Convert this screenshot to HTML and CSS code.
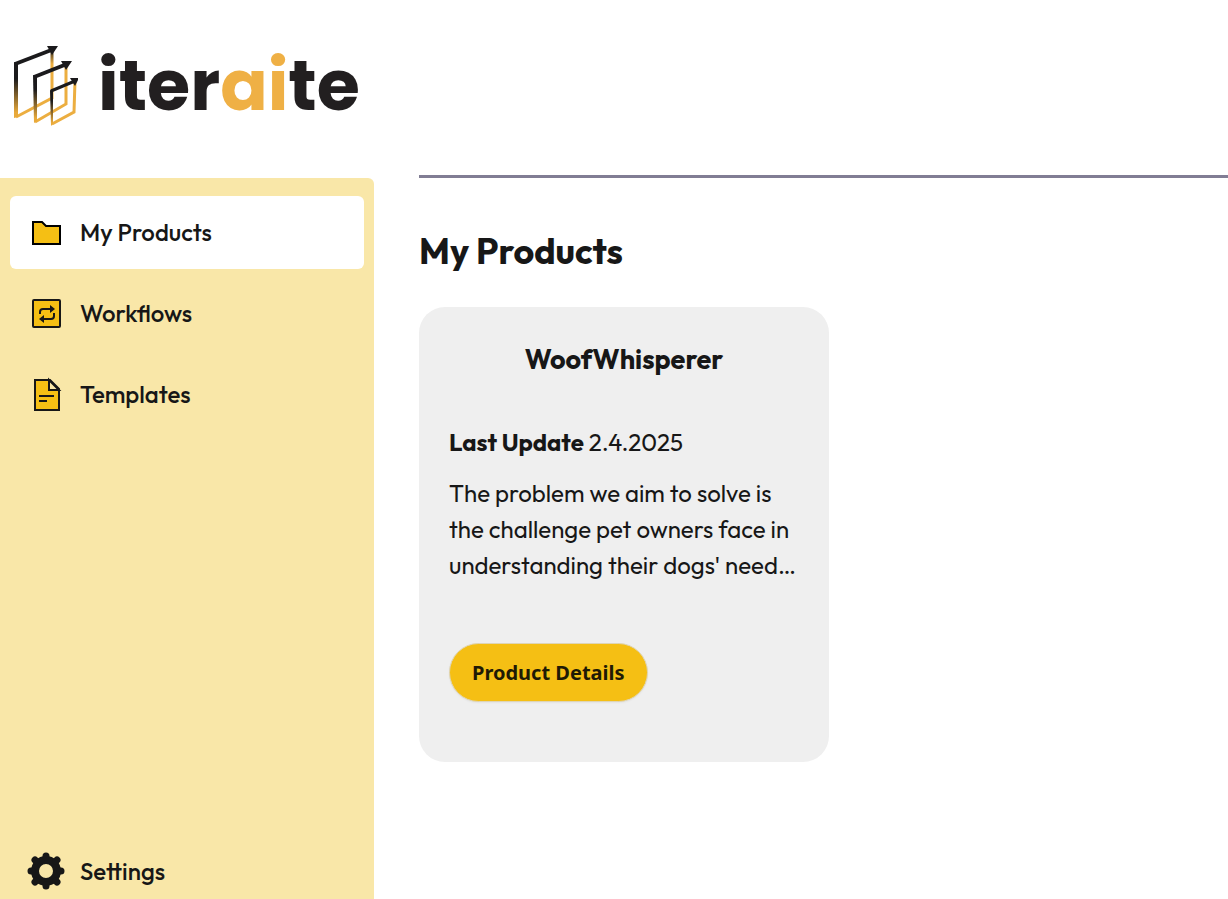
FILE: index.html
```html
<!DOCTYPE html>
<html lang="en">
<head>
    <meta charset="UTF-8">
    <meta name="viewport" content="width=device-width, initial-scale=1.0">
    <title>iteraite - My Products</title>
    <link rel="stylesheet" href="styles.css">
</head>
<body>
    <header class="header">
        <a class="logo" href="#">
            <svg class="logo-mark" width="66" height="84" viewBox="0 0 66 84" fill="none" aria-hidden="true">
                <defs>
                    <linearGradient id="side" x1="0" y1="0" x2="0" y2="1">
                        <stop offset="0.3" stop-color="#1b1a1c"/>
                        <stop offset="0.9" stop-color="#e8a93a"/>
                    </linearGradient>
                    <linearGradient id="edge" gradientUnits="userSpaceOnUse" x1="0" y1="4" x2="0" y2="20">
                        <stop offset="0" stop-color="#1b1a1c"/>
                        <stop offset="1" stop-color="#ecae40"/>
                    </linearGradient>
                </defs>
                <path d="M40 6V54L4 73" stroke="url(#edge)" stroke-width="3"/>
                <path d="M2 18L6 19L6 73L2 74Z" fill="url(#side)"/>
                <path d="M3 20L42 5" stroke="#1b1a1c" stroke-width="4"/>
                <path d="M35 2L46 2L40 11Z" fill="#1b1a1c"/>
                <path d="M54 20V60L23 78" stroke="#ecae40" stroke-width="3"/>
                <path d="M21 31L25 32L25 77L22 79Z" fill="url(#side)"/>
                <path d="M22 33L55 20" stroke="#1b1a1c" stroke-width="4"/>
                <path d="M49 17L60 17L54 26Z" fill="#1b1a1c"/>
                <path d="M63 37L62 68L40 80" stroke="#ecae40" stroke-width="3"/>
                <path d="M38 46L41 47L41 80L39 82Z" fill="url(#side)"/>
                <path d="M39 47L63 37" stroke="#1b1a1c" stroke-width="3"/>
                <path d="M58 34L67 34L63 42Z" fill="#1b1a1c"/>
            </svg>
            <span class="logo-text">iter<span>ai</span>te</span>
        </a>
    </header>
    <div class="container">
        <nav class="sidebar">
            <a class="nav-item active" href="#">
                <svg width="38" height="38" viewBox="0 0 38 38" fill="#f5bf14" stroke="#000" stroke-width="2" aria-hidden="true">
                    <path d="M6 9H15L19 13H33V31H6Z"/>
                </svg>
                My Products
            </a>
            <a class="nav-item" href="#">
                <svg width="38" height="38" viewBox="0 0 38 38" fill="none" stroke="#171717" stroke-width="2" aria-hidden="true">
                    <rect x="6" y="6" width="27" height="27" rx="1" fill="#f5bf14"/>
                    <path d="M13 20V18Q13 15 16 15H24M27 19V22Q27 25 24 25H15"/>
                    <path d="M23 11L28 15L23 19ZM17 21L12 25L17 29Z" fill="#171717" stroke="none"/>
                </svg>
                Workflows
            </a>
            <a class="nav-item" href="#">
                <svg width="38" height="38" viewBox="0 0 38 38" fill="none" stroke="#171717" stroke-width="2" aria-hidden="true">
                    <path d="M8 5H23L32 14V35H8Z" fill="#f5bf14"/>
                    <path d="M22 5V15H32Z" fill="#f9e7a8"/>
                    <path d="M12 21H27M12 26H20"/>
                </svg>
                Templates
            </a>
            <a class="nav-item settings" href="#">
                <svg width="38" height="38" viewBox="0 0 38 38" aria-hidden="true">
                    <g fill="none" stroke="#171717" transform="translate(19 19)">
                        <circle r="11" stroke-width="8"/>
                        <path d="M0 -15V-14M0 15V14M-15 0H-14M15 0H14M-11 -11L-10 -10M11 11L10 10M11 -11L10 -10M-11 11L-10 10" stroke-width="7" stroke-linecap="round"/>
                    </g>
                </svg>
                Settings
            </a>
        </nav>
        <main class="content">
            <h1>My Products</h1>
            <section class="products">
                <article class="card">
                    <h2>WoofWhisperer</h2>
                    <p class="update"><strong>Last Update</strong> 2.4.2025</p>
                    <p class="description">The problem we aim to solve is<br>the challenge pet owners face in<br>understanding their dogs' need…</p>
                    <button type="button">Product Details</button>
                </article>
            </section>
        </main>
    </div>
</body>
</html>
```
FILE: styles.css
```css
* {
    box-sizing: border-box;
}
body {
    margin: 0;
    min-height: 100vh;
    display: flex;
    flex-direction: column;
    background-color: #fff;
    color: #171717;
    font-family: Outfit, Lato, sans-serif;
    font-size: 24px;
}
.header {
    height: 175px;
    padding: 44px 12px;
}
.logo {
    display: inline-flex;
    align-items: center;
    gap: 20px;
    color: #221f20;
    text-decoration: none;
}
.logo-text {
    font-family: Poppins, Inter, sans-serif;
    font-size: 70px;
    font-weight: 700;
    line-height: 80px;
}
.logo-text span {
    color: #efb045;
}
.container {
    flex: 1;
    display: flex;
    gap: 45px;
}
.sidebar {
    display: flex;
    flex-direction: column;
    gap: 8px;
    width: 374px;
    flex-shrink: 0;
    margin-top: 3px;
    padding: 18px 10px 0;
    background-color: #f9e7a8;
    border-top-right-radius: 6px;
}
.nav-item {
    display: flex;
    align-items: center;
    gap: 15px;
    height: 73px;
    padding: 0 17px 1px;
    border-radius: 6px;
    color: #171717;
    font-weight: 500;
    text-decoration: none;
}
.nav-item.active {
    background-color: #fff;
}
.nav-item.settings {
    height: 56px;
    margin-top: auto;
}
.content {
    flex: 1;
    border-top: 3px solid #817d94;
}
.content h1 {
    margin: 48px 0 32px;
    font-size: 36px;
    line-height: 49px;
}
.products {
    display: flex;
    flex-wrap: wrap;
    gap: 30px;
}
.card {
    width: 410px;
    padding: 30px 30px 60px;
    background-color: #efefef;
    border-radius: 26px;
}
.card h2 {
    margin: 0 0 45px;
    font-size: 27px;
    line-height: 44px;
    text-align: center;
}
.card p {
    margin: 0;
    line-height: 36px;
}
.card .update {
    margin-bottom: 17px;
    line-height: 32px;
}
.card .description {
    white-space: nowrap;
}
.card button {
    display: block;
    height: 59px;
    margin-top: 60px;
    padding: 0 22px;
    border: 1px solid #dfd5b5;
    border-radius: 30px;
    background-color: #f5bf14;
    color: #1f1a05;
    font-family: "Segoe UI", "Noto Sans", sans-serif;
    font-size: 20px;
    font-weight: 700;
    box-shadow: 0 1px 2px rgba(0, 0, 0, 0.05);
}
```
